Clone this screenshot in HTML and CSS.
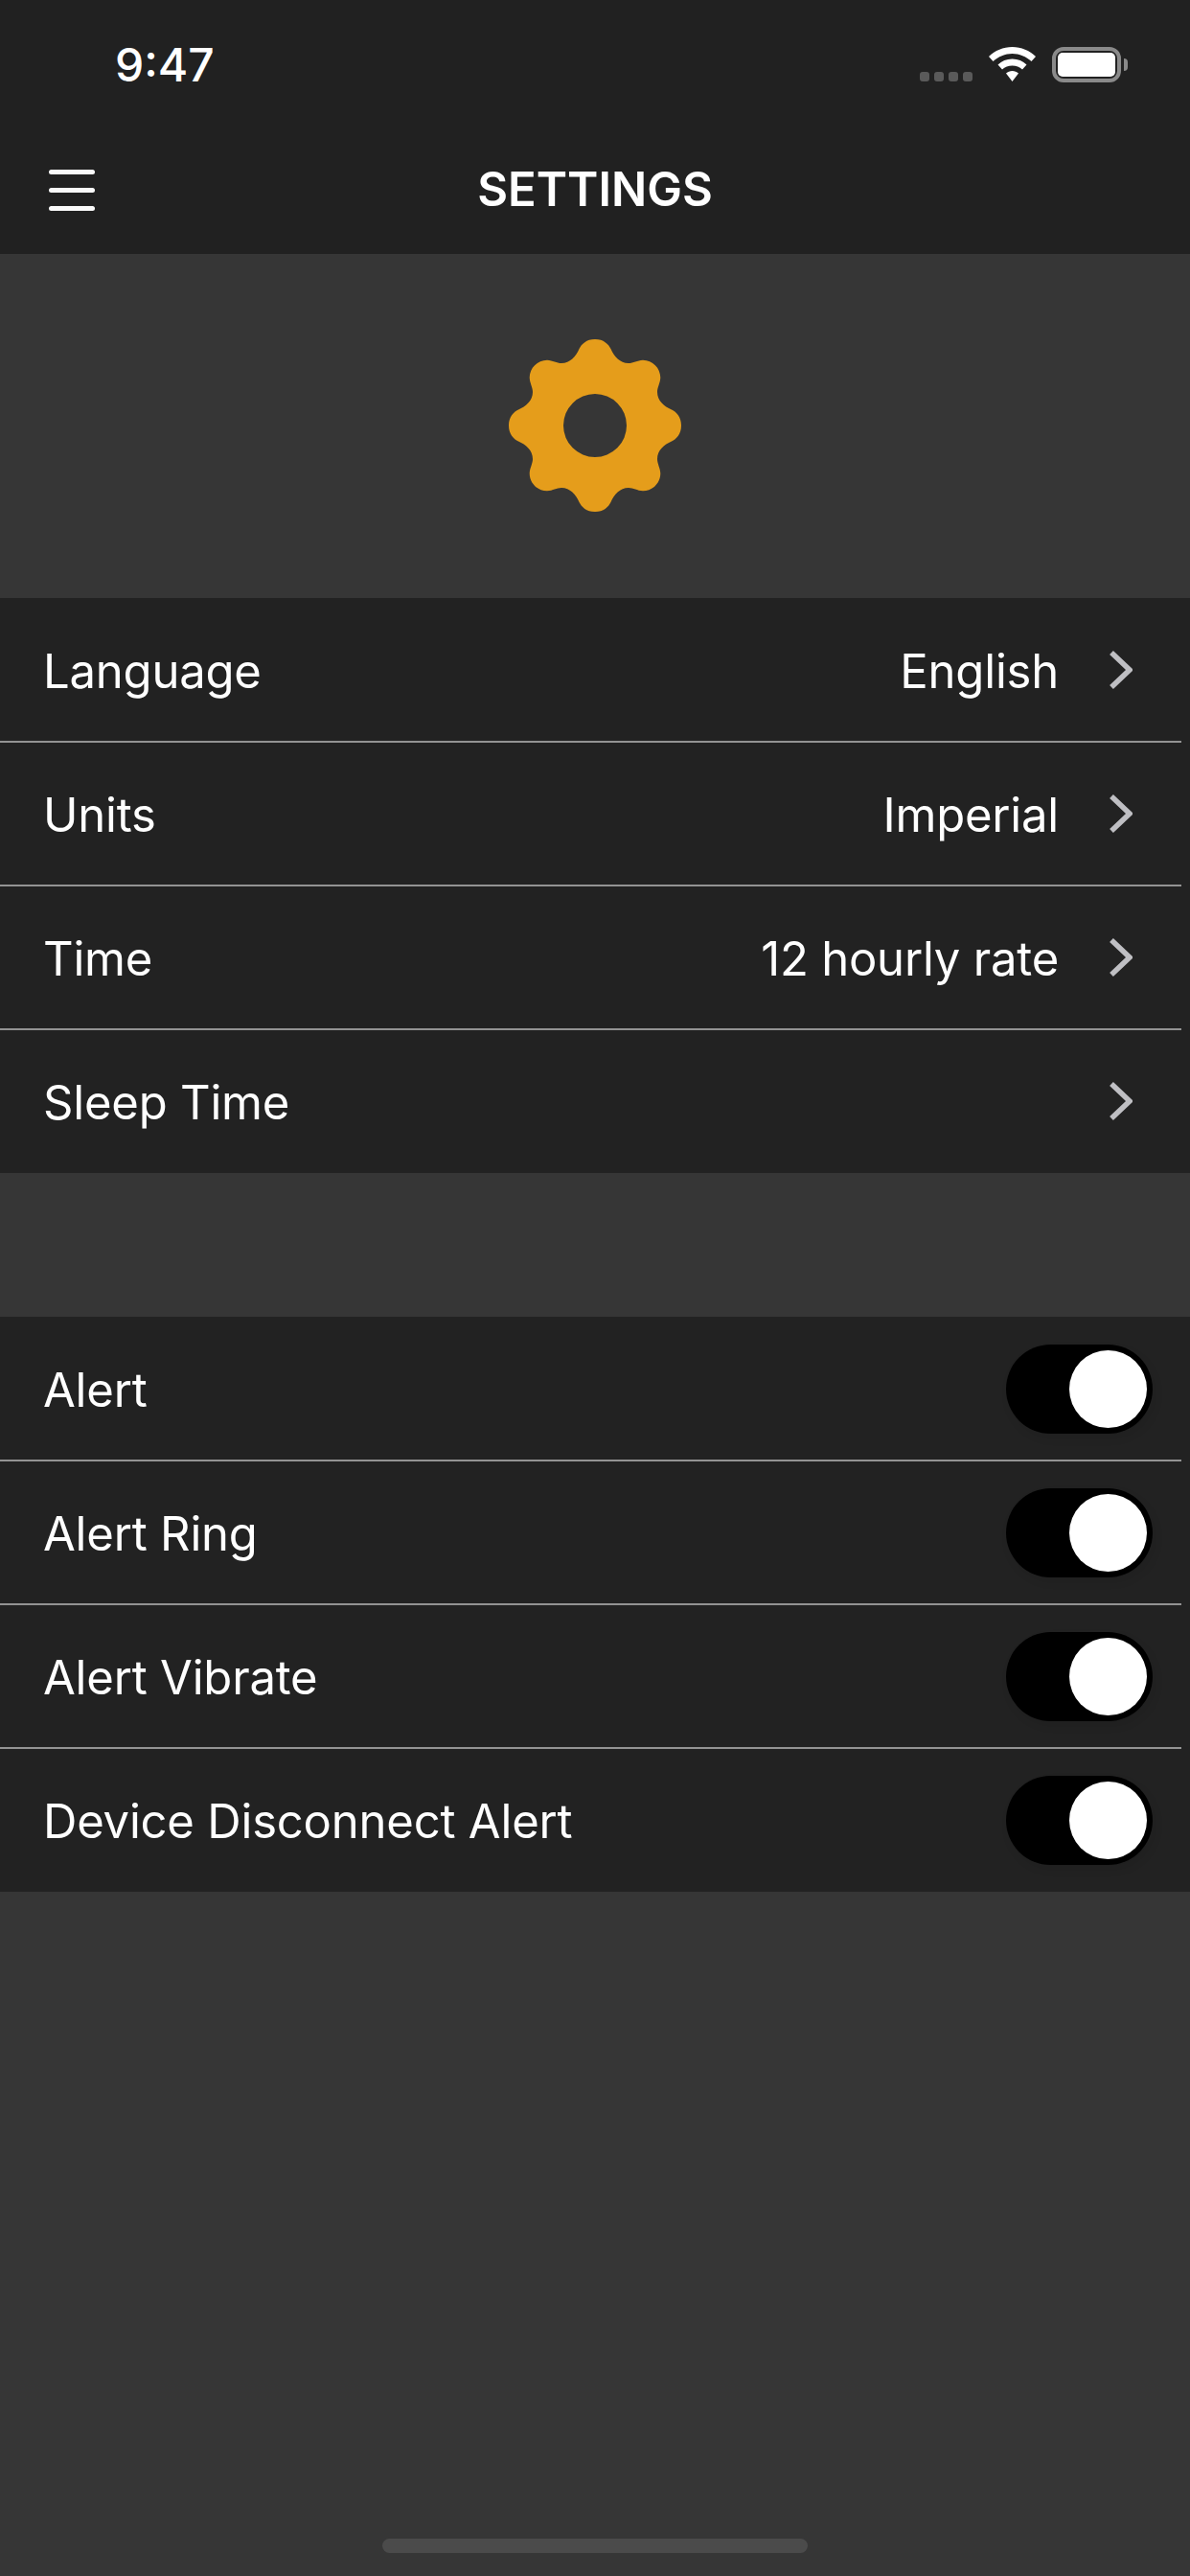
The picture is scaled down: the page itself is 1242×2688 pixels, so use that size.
FILE: index.html
```html
<!DOCTYPE html>
<html lang="en">
<head>
<meta charset="utf-8">
<title>Settings</title>
<link rel="stylesheet" href="styles.css">
</head>
<body>
<div class="app">
  <header class="top">
    <div class="status">
      <span class="clock">9:47</span>
      <div class="status-icons">
        <div class="signal"><i></i><i></i><i></i><i></i></div>
        <svg class="wifi" width="49" height="36" viewBox="0 0 49 36"><path fill="#fff" d="M24.500 0C34 0 42.500 3.800 49 10L44.500 15C39 10 32 7 24.500 7C17 7 10 10 4.500 15L0 10C6.500 3.800 15 0 24.500 0Z"/><path fill="#fff" d="M24.500 12.500C30.500 12.500 35.500 14.800 39.500 18.500L35 23.500C32.200 21 28.500 19.500 24.500 19.500C20.500 19.500 16.800 21 14 23.500L9.500 18.500C13.500 14.800 18.500 12.500 24.500 12.500Z"/><path fill="#fff" d="M24.500 25C27 25 29.200 26 31 27.500L24.500 36L18 27.500C19.800 26 22 25 24.500 25Z"/></svg>
        <div class="battery"><div class="battery-fill"></div></div>
        <div class="battery-cap"></div>
      </div>
    </div>
    <div class="nav">
      <div class="menu"><i></i><i></i><i></i></div>
      <h1 class="title">SETTINGS</h1>
    </div>
  </header>

  <section class="hero">
    <svg class="gear" width="184" height="184" viewBox="-92 -92 184 184"><path fill="#e59d1b" fill-rule="evenodd" d="M0 -90C9 -90 14 -85 16.500 -80C20 -72 26 -65 35 -65C40 -65 44 -68 50 -68.300C60 -68.300 68.300 -60 68.300 -50C68 -44 65 -40 65 -35C65 -26 72 -20 80 -16.500C85 -14 90 -9 90 0C90 9 85 14 80 16.500C72 20 65 26 65 35C65 40 68 44 68.300 50C68.300 60 60 68.300 50 68.300C44 68 40 65 35 65C26 65 20 72 16.500 80C14 85 9 90 0 90C-9 90 -14 85 -16.500 80C-20 72 -26 65 -35 65C-40 65 -44 68 -50 68.300C-60 68.300 -68.300 60 -68.300 50C-68 44 -65 40 -65 35C-65 26 -72 20 -80 16.500C-85 14 -90 9 -90 0C-90 -9 -85 -14 -80 -16.500C-72 -20 -65 -26 -65 -35C-65 -40 -68 -44 -68.300 -50C-68.300 -60 -60 -68.300 -50 -68.300C-44 -68 -40 -65 -35 -65C-26 -65 -20 -72 -16.500 -80C-14 -85 -9 -90 0 -90ZM0 -33A33 33 0 1 0 0 33A33 33 0 1 0 0 -33Z"/></svg>
  </section>

  <section class="group">
    <div class="row"><span class="label">Language</span><span class="value">English</span><svg class="chev" width="24" height="40" viewBox="0 0 24 40"><path d="M2 2L21 20L2 38" fill="none" stroke="#bfbfc3" stroke-width="5.500"/></svg></div>
    <div class="row"><span class="label">Units</span><span class="value">Imperial</span><svg class="chev" width="24" height="40" viewBox="0 0 24 40"><path d="M2 2L21 20L2 38" fill="none" stroke="#bfbfc3" stroke-width="5.500"/></svg></div>
    <div class="row"><span class="label">Time</span><span class="value">12 hourly rate</span><svg class="chev" width="24" height="40" viewBox="0 0 24 40"><path d="M2 2L21 20L2 38" fill="none" stroke="#bfbfc3" stroke-width="5.500"/></svg></div>
    <div class="row"><span class="label">Sleep Time</span><svg class="chev" width="24" height="40" viewBox="0 0 24 40"><path d="M2 2L21 20L2 38" fill="none" stroke="#bfbfc3" stroke-width="5.500"/></svg></div>
  </section>

  <section class="group group-toggles">
    <div class="row"><span class="label">Alert</span><div class="toggle"><div class="knob"></div></div></div>
    <div class="row"><span class="label">Alert Ring</span><div class="toggle"><div class="knob"></div></div></div>
    <div class="row"><span class="label">Alert Vibrate</span><div class="toggle"><div class="knob"></div></div></div>
    <div class="row"><span class="label">Device Disconnect Alert</span><div class="toggle"><div class="knob"></div></div></div>
  </section>

  <div class="home"><div class="home-bar"></div></div>
</div>
</body>
</html>
```
FILE: styles.css
```css
* { box-sizing: border-box; }
html, body { margin: 0; padding: 0; }
body {
  width: 1242px;
  height: 2688px;
  overflow: hidden;
  background: #363636;
  font-family: Inter, "Liberation Sans", sans-serif;
  color: #fff;
}
.app {
  height: 2688px;
  display: flex;
  flex-direction: column;
}
.top { height: 265px; background: #212121; }
.status {
  height: 128px;
  padding: 40px 65px 0 120px;
  display: flex;
  justify-content: space-between;
  align-items: flex-start;
}
.clock {
  font-size: 48px;
  line-height: 56px;
  font-weight: 500;
  color: #fff;
}
.status-icons {
  display: flex;
  align-items: flex-start;
  padding-top: 9px;
}
.signal {
  display: flex;
  gap: 5px;
  margin-top: 26px;
  margin-right: 17px;
}
.signal i {
  display: block;
  width: 10px;
  height: 10px;
  border-radius: 3px;
  background: #5a5a5a;
}
.wifi { display: block; margin-right: 17px; }
.battery {
  width: 72px;
  height: 37px;
  padding: 2px;
  border: 4px solid #8a8a8a;
  border-radius: 12px;
}
.battery-fill {
  width: 100%;
  height: 100%;
  border-radius: 5px;
  background: #fff;
}
.battery-cap {
  width: 4px;
  height: 13px;
  margin: 12px 0 0 3px;
  border-radius: 0 4px 4px 0;
  background: #8a8a8a;
}
.nav {
  height: 137px;
  padding: 49px 0 0 51px;
  position: relative;
}
.menu { width: 48px; }
.menu i {
  display: block;
  height: 5px;
  border-radius: 3px;
  background: #fafafa;
  margin-bottom: 14px;
}
.title {
  position: absolute;
  left: 0;
  right: 0;
  top: 41px;
  margin: 0;
  text-align: center;
  font-size: 49px;
  line-height: 58px;
  font-weight: 600;
}
.hero {
  height: 359px;
  padding-bottom: 1px;
  display: flex;
  align-items: center;
  justify-content: center;
}
.gear { display: block; }
.group { background: #222; }
.group-toggles { margin-top: 150px; }
.row {
  height: 150px;
  padding: 0 0 0 45px;
  display: flex;
  align-items: center;
  position: relative;
}
.row + .row::before {
  content: "";
  position: absolute;
  left: 0;
  right: 9px;
  top: -1px;
  height: 2px;
  background: #b9b9b9;
  transform: scaleY(.75);
}
.label {
  flex: 1;
  font-size: 49px;
  line-height: 60px;
  letter-spacing: -0.2px;
  padding-top: 3px;
}
.value {
  font-size: 49px;
  line-height: 60px;
  letter-spacing: -0.2px;
  padding-top: 3px;
  margin-right: 53px;
}
.chev { display: block; margin-right: 60px; }
.toggle {
  width: 153px;
  height: 93px;
  margin-right: 39px;
  padding: 6px;
  border-radius: 47px;
  background: #000;
  display: flex;
  justify-content: flex-end;
  box-shadow: 3px 5px 10px rgba(0, 0, 0, .08);
}
.knob {
  width: 81px;
  height: 81px;
  border-radius: 50%;
  background: #fff;
}
.home {
  margin-top: auto;
  padding: 0 399px 24px;
}
.home-bar {
  height: 15px;
  border-radius: 8px;
  background: #4b4b4b;
}
```
